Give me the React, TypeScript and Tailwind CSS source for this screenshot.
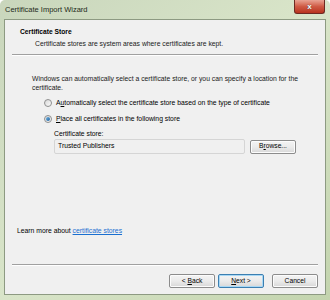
const font = { fontFamily: '"Liberation Sans", Arial, sans-serif' };

function Radio({ checked }: { checked?: boolean }) {
  return (
    <span className="relative flex h-[8px] w-[8px] shrink-0 items-center justify-center rounded-full border border-[#8e8f8f] bg-gradient-to-br from-[#d8d8d8] to-[#fbfbfb]">
      {checked && <span className="h-[4px] w-[4px] rounded-full bg-gradient-to-br from-[#6fb3e0] to-[#1b5f9e]" />}
    </span>
  );
}

function WinButton({ children, primary }: { children: React.ReactNode; primary?: boolean }) {
  return (
    <button
      type="button"
      className={`flex h-[14px] w-[46px] items-center justify-center rounded-[2px] border bg-gradient-to-b from-[#f4f4f4] via-[#ebebeb] to-[#d7d7d7] text-[6.7px] text-black ${
        primary ? 'border-[#3c7fb1] shadow-[inset_0_0_0_1px_#a8d8f5]' : 'border-[#8c8c8c] shadow-[inset_0_0_0_1px_#fcfcfc]'
      }`}
    >
      {children}
    </button>
  );
}

export default function App() {
  return (
    <div
      style={font}
      className="relative flex h-[300px] w-[330px] flex-col overflow-hidden rounded-t-[5px] bg-gradient-to-br from-[#c9d6bc] via-[#d9e5c9] to-[#c3d4ae] text-black"
    >
      {/* title bar */}
      <div className="flex h-[19px] items-center pl-[5px] pr-[5px]">
        <span className="text-[7.5px] text-[#1e2a1a]">Certificate Import Wizard</span>
        <div className="ml-auto -mt-[5px] flex h-[14px] w-[31px] items-center justify-center rounded-b-[3px] border border-t-0 border-[#6d2a22] bg-gradient-to-b from-[#e8a393] via-[#cf5a44] to-[#b8321d]">
          <span className="text-[8px] font-bold leading-none text-white [text-shadow:0_0_1px_#333]">x</span>
        </div>
      </div>

      {/* client area */}
      <div className="mx-[4px] flex h-[276px] flex-col border border-[#8d9a82] bg-[#f0f0f0]">
        <div className="flex flex-col pl-[15px] pt-[7px]">
          <span className="text-[6.7px] font-bold leading-[9px]">Certificate Store</span>
          <span className="mt-[3px] pl-[15px] text-[6.8px] leading-[9px] text-[#1a1a1a]">
            Certificate stores are system areas where certificates are kept.
          </span>
        </div>
        <div className="mx-[7px] mt-[6px] h-[2px] border-t border-b border-t-[#a0a0a0] border-b-white" />

        <div className="flex flex-col pl-[27px] pr-[20px]">
          <p className="mt-[18px] text-[6.8px] leading-[9px] text-[#1a1a1a]">
            Windows can automatically select a certificate store, or you can specify a location for the certificate.
          </p>
          <div className="mt-[6px] flex items-center gap-[4px] pl-[12px] text-[6.8px] leading-[9px]">
            <Radio />
            <span>
              A<span className="underline">u</span>tomatically select the certificate store based on the type of certificate
            </span>
          </div>
          <div className="mt-[7px] flex items-center gap-[4px] pl-[12px] text-[6.8px] leading-[9px]">
            <Radio checked />
            <span>
              <span className="underline">P</span>lace all certificates in the following store
            </span>
          </div>
          <div className="mt-[6px] pl-[22px] text-[6.8px] leading-[9px]">Certificate store:</div>
          <div className="mt-[1px] flex items-center gap-[5px] pl-[22px]">
            <div className="flex h-[15px] w-[191px] items-center rounded-[2px] border border-[#d5d5d5] bg-[#f0f0f0] pl-[3px] text-[6.8px]">
              Trusted Publishers
            </div>
            <WinButton>
              <span>
                B<span className="underline">r</span>owse...
              </span>
            </WinButton>
          </div>
        </div>

        <div className="mt-[72px] pl-[12px] text-[6.8px] leading-[9px]">
          Learn more about <span className="text-[#1a6fd0] underline">certificate stores</span>
        </div>

        <div className="mx-[7px] mt-[29px] h-[2px] border-t border-b border-t-[#a0a0a0] border-b-white" />

        <div className="mt-[8px] flex justify-end pr-[7px]">
          <div className="flex gap-[3px]">
            <WinButton>
              <span>
                &lt; <span className="underline">B</span>ack
              </span>
            </WinButton>
            <WinButton primary>
              <span>
                <span className="underline">N</span>ext &gt;
              </span>
            </WinButton>
          </div>
          <div className="ml-[8px]">
            <WinButton>Cancel</WinButton>
          </div>
        </div>
      </div>
    </div>
  );
}
